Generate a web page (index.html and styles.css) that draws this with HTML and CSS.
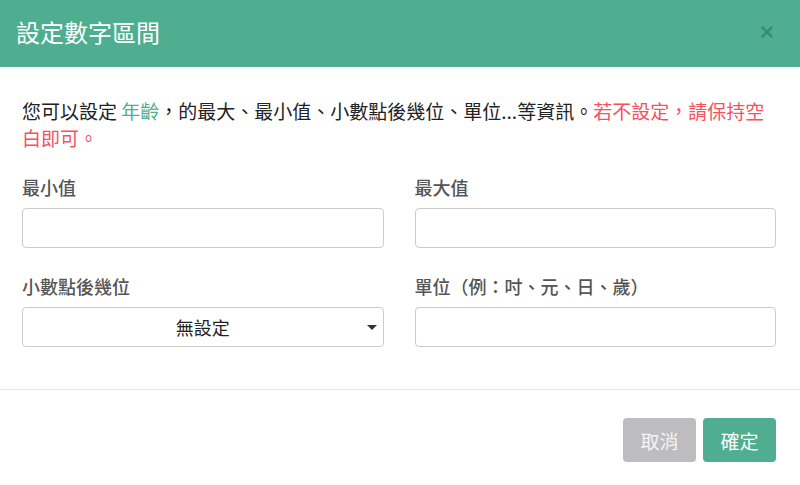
FILE: index.html
```html
<!DOCTYPE html>
<html lang="zh-Hant">
<head>
<meta charset="utf-8">
<link rel="stylesheet" href="styles.css">
</head>
<body>
<div class="modal">
  <div class="modal-header">
    <h1 class="modal-title">設定數字區間</h1>
    <button class="close" aria-label="close">
      <svg width="12" height="12" viewBox="0 0 12 12"><path d="M1.5 1.5L10.5 10.5M10.5 1.5L1.5 10.5" stroke="#3f8a72" stroke-width="2.6" stroke-linecap="round"/></svg>
    </button>
  </div>
  <div class="modal-body">
    <p class="intro">您可以設定 <span class="hl">年齡</span>，的最大、最小值、小數點後幾位、單位...等資訊。<span class="warn">若不設定，請保持空白即可。</span></p>
    <div class="form-grid">
      <div class="field">
        <label class="label">最小值</label>
        <input class="control" type="text">
      </div>
      <div class="field">
        <label class="label">最大值</label>
        <input class="control" type="text">
      </div>
      <div class="field">
        <label class="label">小數點後幾位</label>
        <div class="select">
          <span class="select-text">無設定</span>
          <span class="caret"></span>
        </div>
      </div>
      <div class="field">
        <label class="label">單位（例：吋、元、日、歲）</label>
        <input class="control" type="text">
      </div>
    </div>
  </div>
  <div class="modal-footer">
    <button class="btn btn-cancel">取消</button>
    <button class="btn btn-ok">確定</button>
  </div>
</div>
</body>
</html>
```

FILE: styles.css
```css
html, body {
  margin: 0;
  padding: 0;
  background: #ffffff;
}
body {
  font-family: "Noto Sans CJK TC", "Noto Sans", sans-serif;
  color: #222;
}
.modal {
  width: 800px;
  height: 485px;
  display: flex;
  flex-direction: column;
  background: #fff;
}
.modal-header {
  height: 67px;
  background: #4fad90;
  display: flex;
  align-items: center;
  justify-content: space-between;
  padding: 0 27px 4px 16px;
  box-sizing: border-box;
}
.modal-title {
  margin: 0;
  font-size: 24px;
  font-weight: 400;
  color: #fff;
  line-height: 30px;
}
.close {
  border: 0;
  background: transparent;
  padding: 0;
  width: 12px;
  height: 12px;
  display: flex;
}
.modal-body {
  padding: 30px 22px 42px 22px;
}
.intro {
  margin: 0;
  font-size: 19px;
  line-height: 27px;
  color: #222;
}
.hl {
  color: #4fad90;
}
.warn {
  color: #f5515f;
}
.form-grid {
  margin-top: 23px;
  width: 754px;
  display: grid;
  grid-template-columns: 1fr 1fr;
  column-gap: 31px;
  row-gap: 25px;
}
.field {
  display: flex;
  flex-direction: column;
}
.label {
  font-size: 18px;
  line-height: 27px;
  font-weight: 500;
  color: #555;
  margin-bottom: 7px;
}
.control {
  height: 40px;
  box-sizing: border-box;
  border: 1px solid #cccccc;
  border-radius: 4px;
  padding: 0 12px;
  font-size: 18px;
  background: #fff;
  outline: none;
}
.select {
  height: 40px;
  box-sizing: border-box;
  border: 1px solid #cccccc;
  border-radius: 4px;
  display: flex;
  align-items: center;
  justify-content: center;
  position: relative;
  background: #fff;
}
.select-text {
  font-size: 18px;
  color: #222;
}
.caret {
  position: absolute;
  right: 6px;
  top: 17px;
  width: 0;
  height: 0;
  border-left: 5px solid transparent;
  border-right: 5px solid transparent;
  border-top: 5px solid #333;
}
.modal-footer {
  border-top: 1px solid #e5e5e5;
  padding: 28px 24px 0 0;
  display: flex;
  justify-content: flex-end;
  gap: 7px;
}
.btn {
  width: 73px;
  height: 44px;
  border: 0;
  border-radius: 4px;
  font-family: "Noto Sans CJK TC", "Noto Sans", sans-serif;
  font-size: 19px;
  color: #fff;
  padding: 0;
}
.btn-cancel {
  background: #bdbcbf;
  color: #f4f4f4;
}
.btn-ok {
  background: #4fad90;
}
```
